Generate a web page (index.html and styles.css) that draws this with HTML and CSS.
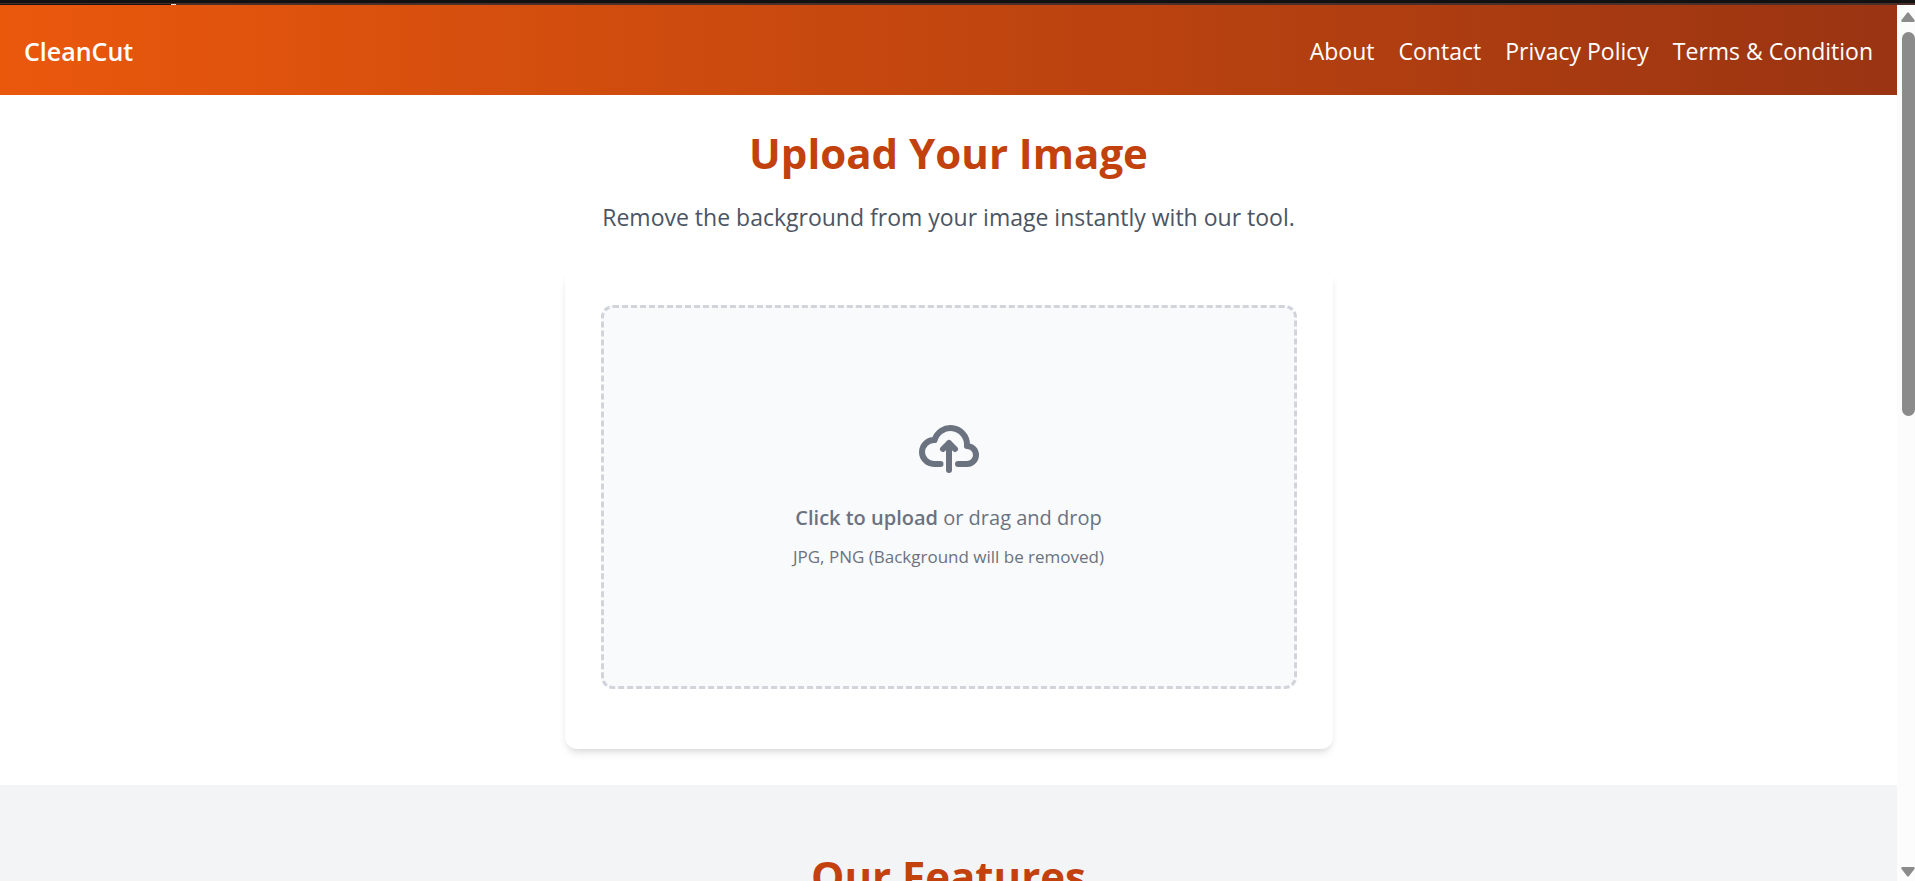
FILE: index.html
```html
<!DOCTYPE html>
<html lang="en">
<head>
    <meta charset="UTF-8">
    <meta name="viewport" content="width=device-width, initial-scale=1.0">
    <title>CleanCut</title>
    <link rel="stylesheet" href="styles.css">
</head>
<body>

<div class="top-strip"><span class="strip-dark"></span><span class="strip-mark"></span></div>

<div class="window">
    <div class="page">
        <header class="navbar">
            <a href="#" class="logo">CleanCut</a>
            <nav class="nav-links">
                <a href="#">About</a>
                <a href="#">Contact</a>
                <a href="#">Privacy Policy</a>
                <a href="#">Terms &amp; Condition</a>
            </nav>
        </header>

        <main class="upload">
            <h1 class="heading">Upload Your Image</h1>
            <p class="subtitle">Remove the background from your image instantly with our tool.</p>

            <div class="card">
                <label for="fileInput" class="dropzone">
                    <svg class="upload-icon" viewBox="0 0 20 16" fill="none" aria-hidden="true">
                        <path stroke="currentColor" stroke-linecap="round" stroke-linejoin="round" stroke-width="2" d="M13 13h3a3 3 0 0 0 0-6h-.025A5.56 5.56 0 0 0 16 6.5 5.5 5.5 0 0 0 5.207 5.021C5.137 5.017 5.071 5 5 5a4 4 0 0 0 0 8h2.167M10 15V6m0 0L8 8m2-2 2 2"/>
                    </svg>
                    <span class="drop-text"><b>Click to upload</b> or drag and drop</span>
                    <span class="drop-hint">JPG, PNG (Background will be removed)</span>
                    <input type="file" id="fileInput" class="file-input" accept="image/png, image/jpeg">
                </label>
            </div>
        </main>

        <section class="features">
            <h2 class="heading">Our Features</h2>
        </section>
    </div>

    <div class="scrollbar" aria-hidden="true">
        <svg class="arrow" viewBox="0 0 14 10"><path d="M6 1q1-1.500 2 0l5.500 7q.8 2-1 2h-11q-1.800 0-1-2z" fill="#8b8b8b"/></svg>
        <div class="track"><div class="thumb"></div></div>
        <svg class="arrow" viewBox="0 0 14 10"><path d="M6 9q1 1.500 2 0l5.500-7q.8-2-1-2h-11q-1.800 0-1 2z" fill="#8b8b8b"/></svg>
    </div>
</div>

</body>
</html>
```

FILE: styles.css
```css
* {
    box-sizing: border-box;
}

body {
    margin: 0;
    height: 100vh;
    display: flex;
    flex-direction: column;
    overflow: hidden;
    background-color: #fff;
    font-family: "Segoe UI", "Open Sans", "Noto Sans", sans-serif;
}

.top-strip {
    flex: none;
    display: flex;
    align-items: flex-end;
    height: 5px;
    background: linear-gradient(#121212 3px, #4a3028 3px);
}

.strip-dark {
    width: 171px;
    height: 1px;
    background-color: #1c1118;
}

.strip-mark {
    width: 5px;
    height: 1px;
    background-color: #e8dcd8;
}

.window {
    flex: 1;
    display: flex;
    min-height: 0;
}

.page {
    flex: 1;
    overflow: hidden;
}

.navbar {
    display: flex;
    align-items: center;
    justify-content: space-between;
    padding: 25px 24px 23px;
    line-height: 42px;
    background: linear-gradient(to right, #ea580c, #9a3412);
}

.navbar a {
    color: #fff;
    text-decoration: none;
}

.logo {
    font-size: 25px;
    font-weight: 600;
}

.nav-links {
    display: flex;
    gap: 24px;
    font-size: 23px;
}

.upload {
    display: flex;
    flex-direction: column;
    align-items: center;
    padding: 31px 24px 36px;
}

.heading {
    margin: 0;
    font-size: 42px;
    line-height: 54px;
    font-weight: 700;
    color: #c2410c;
    text-align: center;
}

.subtitle {
    margin: 16px 0 31px;
    font-size: 23px;
    line-height: 42px;
    color: #4b5563;
    text-align: center;
}

.card {
    width: 100%;
    max-width: 768px;
    padding: 36px 36px 60px;
    border-radius: 12px;
    background-color: #fff;
    box-shadow: 0 6px 9px -2px rgba(0, 0, 0, 0.1), 0 3px 6px -3px rgba(0, 0, 0, 0.1);
}

.dropzone {
    display: flex;
    flex-direction: column;
    align-items: center;
    justify-content: center;
    height: 384px;
    padding-bottom: 6px;
    border: 3px dashed #d1d5db;
    border-radius: 12px;
    background-color: #f9fafb;
    color: #6b7280;
    cursor: pointer;
}

.dropzone:hover {
    background-color: #f3f4f6;
}

.upload-icon {
    width: 60px;
    height: 60px;
    margin-bottom: 24px;
}

.drop-text {
    margin-bottom: 12px;
    font-size: 20px;
    line-height: 30px;
}

.drop-text b {
    font-weight: 600;
}

.drop-hint {
    font-size: 17px;
    line-height: 24px;
}

.file-input {
    display: none;
}

.features {
    padding: 64px 24px;
    background-color: #f3f4f6;
}

.scrollbar {
    flex: none;
    display: flex;
    flex-direction: column;
    width: 18px;
    padding: 7px 0 4px 4px;
    background-color: #fcfcfc;
}

.arrow {
    flex: none;
    width: 14px;
    height: 10px;
}

.track {
    flex: 1;
    padding: 10px 0 0 1px;
}

.thumb {
    width: 13px;
    height: 46%;
    border-radius: 7px;
    background-color: #8b8b8b;
}
```
